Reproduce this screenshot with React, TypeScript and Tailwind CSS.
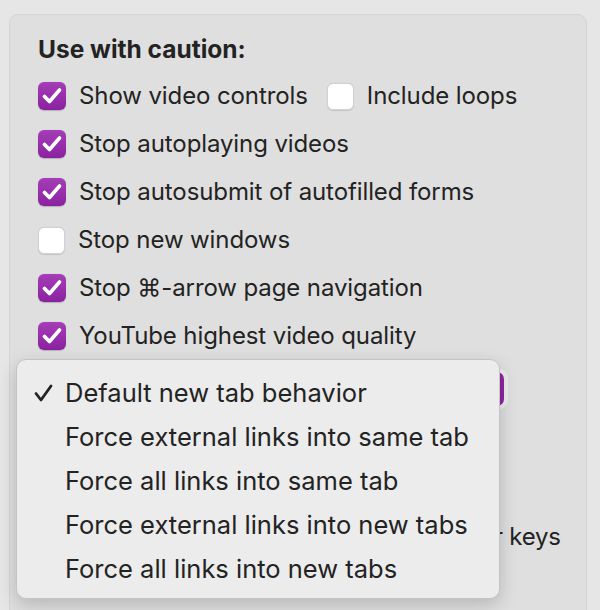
import React from "react"

type Row = { label: string; checked: boolean; extra?: { label: string; checked: boolean } }

const ROWS: Row[] = [
  { label: "Show video controls", checked: true, extra: { label: "Include loops", checked: false } },
  { label: "Stop autoplaying videos", checked: true },
  { label: "Stop autosubmit of autofilled forms", checked: true },
  { label: "Stop new windows", checked: false },
  { label: "Stop \u2318-arrow page navigation", checked: true },
  { label: "YouTube highest video quality", checked: true },
]

const MENU = [
  "Default new tab behavior",
  "Force external links into same tab",
  "Force all links into same tab",
  "Force external links into new tabs",
  "Force all links into new tabs",
]

function Checkbox({ checked }: { checked: boolean }) {
  if (!checked) {
    return (
      <div className="w-[27px] h-[27px] shrink-0 rounded-[6px] bg-white border border-[#d2d2d2] shadow-[0_0.5px_1px_rgba(0,0,0,0.12)]" />
    )
  }
  return (
    <div className="w-[28px] h-[28px] shrink-0 rounded-[6px] bg-gradient-to-b from-[#a43eb6] to-[#8b21a0] flex items-center justify-center shadow-[0_0.5px_1px_rgba(0,0,0,0.2)]">
      <svg width="20" height="16" viewBox="0 0 20 16" fill="none">
        <path d="M2.5 8.5 L7.5 13.5 L17.5 2" stroke="white" strokeWidth="3.6" strokeLinecap="round" strokeLinejoin="round" />
      </svg>
    </div>
  )
}

export default function App() {
  return (
    <div className="relative w-[600px] h-[610px] overflow-hidden bg-[#e6e6e6] font-['Inter',sans-serif] text-[#232323]">
      {/* Settings panel */}
      <div className="ml-[9px] mt-[14px] w-[578px] h-[620px] rounded-[9px] border border-[#d5d5d5] bg-[#dfdfdf] pl-[28px] pt-[20px]">
        <h2 className="text-[24.5px] leading-[28px] font-bold">Use with caution:</h2>

        <div className="mt-[19px] flex flex-col gap-[20px]">
          {ROWS.map((row) => (
            <div key={row.label} className="h-[28px] flex items-center">
              <Checkbox checked={row.checked} />
              <span className="ml-[13px] text-[24px] leading-[28px] tracking-[-0.1px]">{row.label}</span>
              {row.extra && (
                <>
                  <div className="ml-[19px]">
                    <Checkbox checked={row.extra.checked} />
                  </div>
                  <span className="ml-[13px] text-[24px] leading-[28px] tracking-[-0.1px]">{row.extra.label}</span>
                </>
              )}
            </div>
          ))}

          {/* popup button, hidden behind the open menu */}
          <div className="h-[34px] w-[466px] mt-[2px] rounded-[7px] bg-[#8e24a3] ring-[4px] ring-[#ececec]" />

          <div className="h-[28px]" />
          <div className="h-[28px]" />
          <div className="h-[28px] flex items-center mt-[1px]">
            <Checkbox checked={false} />
            <span className="ml-[13px] text-[24px] leading-[28px] tracking-[-0.2px]">Don't force links opened with modifier keys</span>
          </div>
        </div>
      </div>

      {/* Open popup menu */}
      <div className="absolute left-[16px] top-[359px] w-[484px] h-[240px] rounded-[10px] bg-[#ececec] border border-[#c4c4c4] shadow-[0_6px_18px_rgba(0,0,0,0.18)] pt-[11px]">
        {MENU.map((item, i) => (
          <div key={item} className="h-[44px] flex items-center">
            <div className="w-[48px] flex justify-end pr-[12px]">
              {i === 0 && (
                <svg width="19" height="18" viewBox="0 0 19 18" fill="none">
                  <path d="M2 9.5 L7 16 L17 2" stroke="#232323" strokeWidth="2.8" strokeLinecap="round" strokeLinejoin="round" />
                </svg>
              )}
            </div>
            <span className="text-[25.5px] leading-[30px]">{item}</span>
          </div>
        ))}
      </div>
    </div>
  )
}
